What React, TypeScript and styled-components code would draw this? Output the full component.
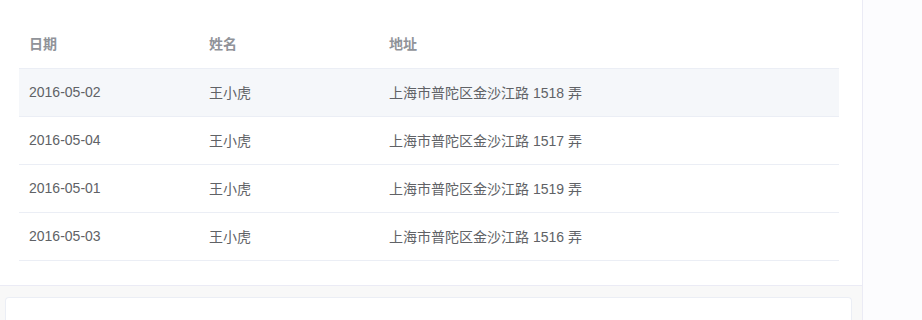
import React from 'react';
import styled, { createGlobalStyle } from 'styled-components';

const GlobalStyle = createGlobalStyle`
  html, body {
    margin: 0;
    padding: 0;
    background: #fcfcfe;
    font-family: "Liberation Sans", "Noto Sans CJK SC", sans-serif;
  }
`;

const Page = styled.div`
  display: flex;
  height: 320px;
  overflow: hidden;
`;

const Main = styled.div`
  width: 862px;
  border-right: 1px solid #ebebf5;
  background: #f8f8f8;
  display: flex;
  flex-direction: column;
`;

const TablePanel = styled.div`
  background: #fff;
  padding: 20px 23px 24px 19px;
  border-bottom: 1px solid #ebebf5;
`;

const Table = styled.table`
  width: 820px;
  border-collapse: collapse;
  table-layout: fixed;
  font-size: 14px;
`;

const HeadCell = styled.th<{ $w?: number }>`
  width: ${(p) => (p.$w ? `${p.$w}px` : 'auto')};
  height: 48px;
  padding: 0 10px 2px;
  text-align: left;
  color: #909399;
  font-weight: bold;
  border-bottom: 1px solid #ebeef5;
  box-sizing: border-box;
`;

const Row = styled.tr<{ $hover?: boolean }>`
  background: ${(p) => (p.$hover ? '#f5f7fa' : '#fff')};
`;

const Cell = styled.td`
  height: 48px;
  padding: 0 10px;
  color: #606266;
  border-bottom: 1px solid #ebeef5;
  box-sizing: border-box;
`;

const Lower = styled.div`
  padding: 11px 10px 0 5px;
  flex: 1;
`;

const Card = styled.div`
  height: 100%;
  background: #fff;
  border: 1px solid #ebeef5;
  border-bottom: none;
  border-radius: 4px 4px 0 0;
`;

const rows = [
  { date: '2016-05-02', name: '王小虎', address: '上海市普陀区金沙江路 1518 弄' },
  { date: '2016-05-04', name: '王小虎', address: '上海市普陀区金沙江路 1517 弄' },
  { date: '2016-05-01', name: '王小虎', address: '上海市普陀区金沙江路 1519 弄' },
  { date: '2016-05-03', name: '王小虎', address: '上海市普陀区金沙江路 1516 弄' },
];

export default function App() {
  return (
    <>
      <GlobalStyle />
      <Page>
        <Main>
          <TablePanel>
            <Table>
              <thead>
                <tr>
                  <HeadCell $w={180}>日期</HeadCell>
                  <HeadCell $w={180}>姓名</HeadCell>
                  <HeadCell>地址</HeadCell>
                </tr>
              </thead>
              <tbody>
                {rows.map((r, i) => (
                  <Row key={r.date} $hover={i === 0}>
                    <Cell>{r.date}</Cell>
                    <Cell>{r.name}</Cell>
                    <Cell>{r.address}</Cell>
                  </Row>
                ))}
              </tbody>
            </Table>
          </TablePanel>
          <Lower>
            <Card />
          </Lower>
        </Main>
      </Page>
    </>
  );
}
